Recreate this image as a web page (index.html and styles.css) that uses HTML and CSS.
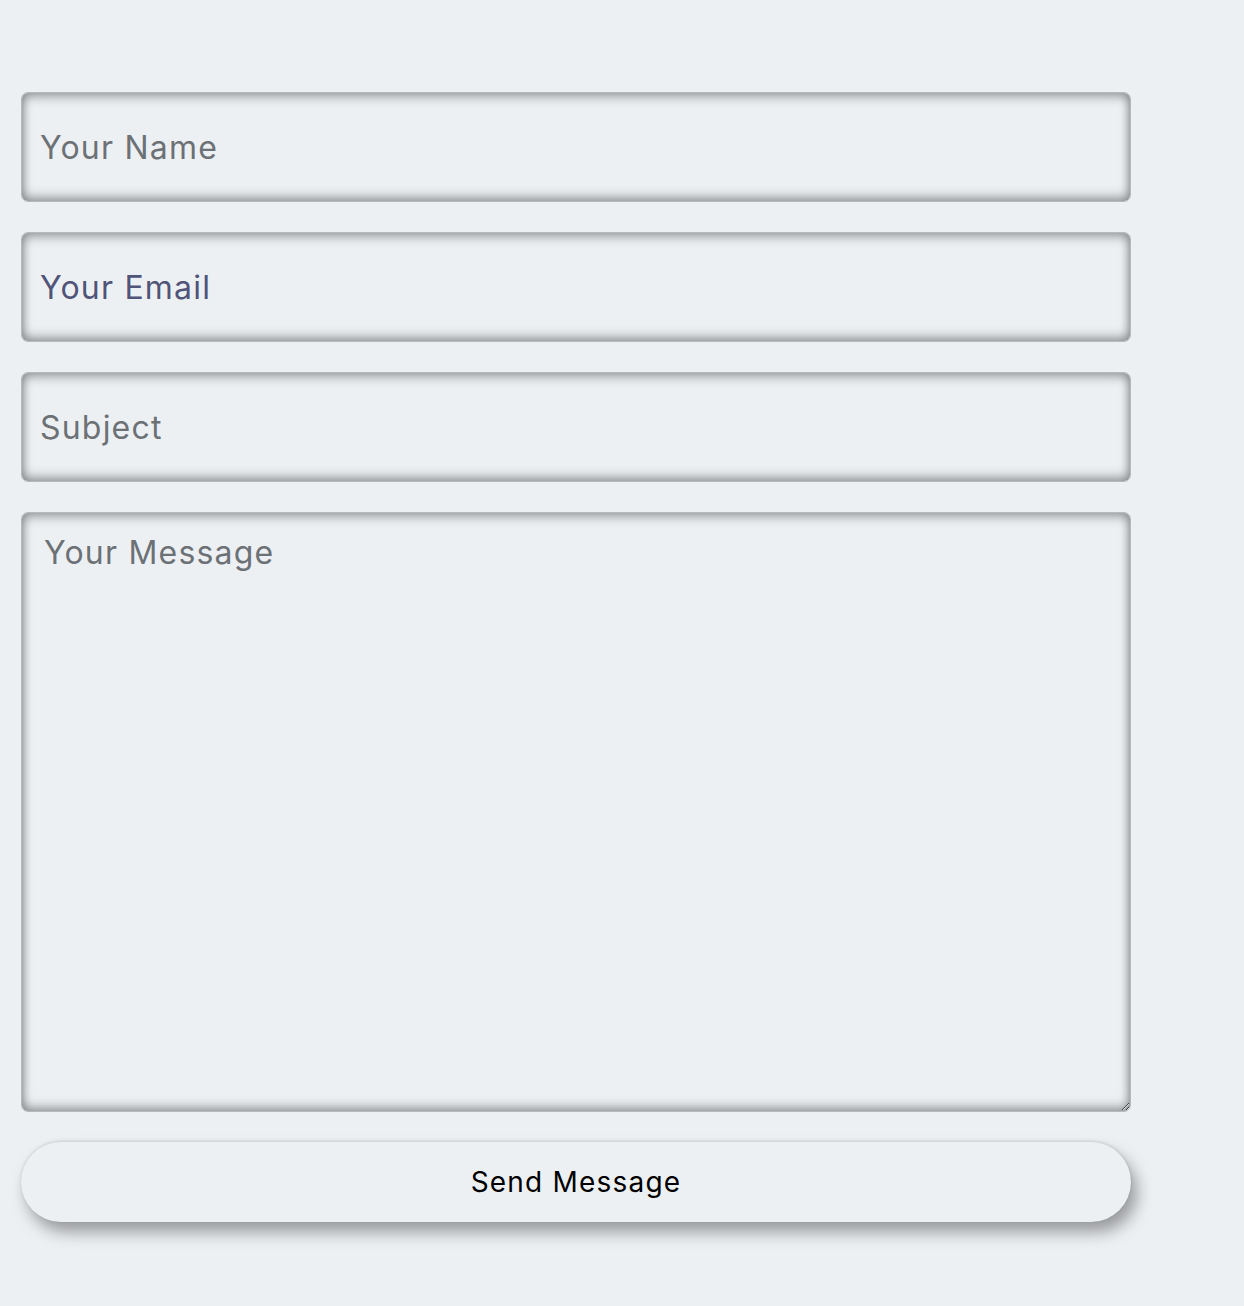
FILE: index.html
```html
<!DOCTYPE html>
<html>
<head>
<meta charset="utf-8">
<link rel="stylesheet" href="styles.css">
</head>
<body>
<form class="contact-form">
  <input class="field" type="text" placeholder="Your Name">
  <input class="field field-email" type="email" placeholder="Your Email">
  <input class="field" type="text" placeholder="Subject">
  <textarea class="field field-message" placeholder="Your Message"></textarea>
  <button class="send-btn" type="button">Send Message</button>
</form>
</body>
</html>
```
FILE: styles.css
```css
html, body {
  margin: 0;
  padding: 0;
  background: #edf0f3;
}
body {
  font-family: Inter, "Open Sans", sans-serif;
}
.contact-form {
  display: flex;
  flex-direction: column;
  gap: 30px;
  width: 1110px;
  padding: 92px 0 60px 21px;
}
.field {
  box-sizing: border-box;
  width: 100%;
  height: 110px;
  margin: 0;
  padding: 0 18px;
  border: 1.5px solid #b6b9bd;
  border-radius: 7px;
  background: #edf0f3;
  box-shadow: inset 0 6px 10px rgba(0,0,0,0.2), inset 0 -6px 10px rgba(0,0,0,0.22), inset 4px 0 9px rgba(0,0,0,0.12), inset -4px 0 9px rgba(0,0,0,0.12);
  font-family: Inter, "Open Sans", sans-serif;
  font-size: 32px;
  letter-spacing: 1.2px;
  color: #333;
  outline: none;
}
.field::placeholder {
  color: #6c7176;
  opacity: 1;
}
.field-email::placeholder {
  color: #4f5478;
}
.field-message {
  height: 600px;
  padding: 20px 22px;
  resize: vertical;
}
.send-btn {
  box-sizing: border-box;
  width: 100%;
  height: 80px;
  margin: 0;
  border: none;
  border-radius: 40px;
  background: #edf0f3;
  box-shadow: 6px 10px 16px rgba(0,0,0,0.36), 0 -1px 3px rgba(0,0,0,0.12);
  font-family: Inter, "Open Sans", sans-serif;
  font-size: 28px;
  color: #000;
  letter-spacing: 1.2px;
  cursor: pointer;
}
```
